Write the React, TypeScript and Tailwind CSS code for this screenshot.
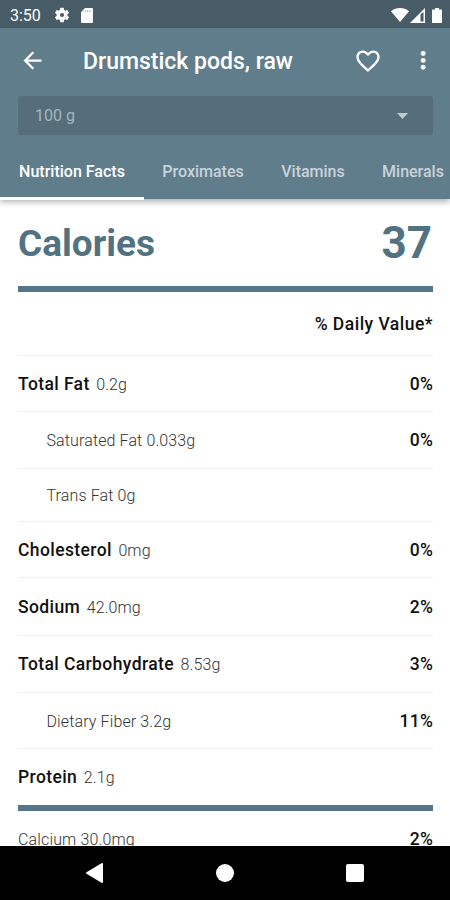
import React from "react";
import clsx from "clsx";

interface NutrientRow {
  name: string;
  amount: string;
  daily?: string;
  indented?: boolean;
  height: string;
}

const tabs = [
  { label: "Nutrition Facts", width: "w-[144px]", active: true },
  { label: "Proximates", width: "w-[118px]" },
  { label: "Vitamins", width: "w-[102px]" },
  { label: "Minerals", width: "w-[98px]" },
];

const rows: NutrientRow[] = [
  { name: "Total Fat", amount: "0.2g", daily: "0%", height: "h-[56px]" },
  { name: "Saturated Fat", amount: "0.033g", daily: "0%", indented: true, height: "h-[57px]" },
  { name: "Trans Fat", amount: "0g", indented: true, height: "h-[53px]" },
  { name: "Cholesterol", amount: "0mg", daily: "0%", height: "h-[56px]" },
  { name: "Sodium", amount: "42.0mg", daily: "2%", height: "h-[58px]" },
  { name: "Total Carbohydrate", amount: "8.53g", daily: "3%", height: "h-[57px]" },
  { name: "Dietary Fiber", amount: "3.2g", daily: "11%", indented: true, height: "h-[56px]" },
  { name: "Protein", amount: "2.1g", height: "h-[57px]" },
];

function StatusBar() {
  return (
    <div className="h-7 bg-[#485c67] flex items-center justify-between pl-[10px] pr-[8px] pt-[2px] text-white">
      <div className="flex items-center">
        <span className="w-[43px] pt-px text-[16px] leading-none">3:50</span>
        <svg className="size-[18px]" viewBox="0 0 24 24" fill="currentColor">
          <path d="M19.14 12.94c.04-.3.06-.61.06-.94 0-.32-.02-.64-.07-.94l2.03-1.58a.49.49 0 0 0 .12-.61l-1.92-3.32a.49.49 0 0 0-.59-.22l-2.39.96c-.5-.38-1.03-.7-1.62-.94l-.36-2.54a.48.48 0 0 0-.48-.41h-3.84a.48.48 0 0 0-.47.41l-.36 2.54c-.59.24-1.13.57-1.62.94l-2.39-.96a.48.48 0 0 0-.59.22L2.74 8.87a.48.48 0 0 0 .12.61l2.03 1.58c-.05.3-.09.63-.09.94s.02.64.07.94l-2.03 1.58a.49.49 0 0 0-.12.61l1.92 3.32c.12.22.37.29.59.22l2.39-.96c.5.38 1.03.7 1.62.94l.36 2.54c.05.24.24.41.48.41h3.84c.24 0 .44-.17.47-.41l.36-2.54c.59-.24 1.13-.56 1.62-.94l2.39.96c.22.08.47 0 .59-.22l1.92-3.32a.48.48 0 0 0-.12-.61l-2.01-1.58zM12 14.8a2.8 2.8 0 1 1 0-5.6 2.8 2.8 0 0 1 0 5.6z" />
        </svg>
        <svg className="ml-[10px] w-3 h-[15px]" viewBox="0 0 12 15">
          <path d="M4 0h6.7C11.5 0 12 .5 12 1.300v12.400c0 .8-.5 1.300-1.300 1.300H1.300C.5 15 0 14.500 0 13.700V4.300z" fill="white" />
          <path d="M4.300 2v2.200M6.700 2v2.200M9.100 2v2.200" stroke="#a7b1b6" strokeWidth="1" />
        </svg>
      </div>
      <div className="flex items-center">
        <svg className="w-[18px] h-[14px]" viewBox="0 0 18 14">
          <path d="M0 3.200C5-1 13-1 18 3.200L9 14z" fill="white" />
        </svg>
        <svg className="ml-px w-[15px] h-[15px]" viewBox="0 0 15 15">
          <path d="M0 15 15 0v15z" fill="white" />
          <path d="M10.500 6.200 13.500 4v9.500h-3z" fill="#485c67" />
        </svg>
        <svg className="ml-[7px] w-[10px] h-[15px]" viewBox="0 0 10 15">
          <path d="M3 0h4v1.500h2c.6 0 1 .4 1 1V14c0 .6-.4 1-1 1H1c-.6 0-1-.4-1-1V2.500c0-.6.4-1 1-1h2z" fill="white" />
        </svg>
      </div>
    </div>
  );
}

function AppBar() {
  return (
    <header className="h-[171px] bg-[#607d8b] text-white relative z-10 shadow-[0_3px_6px_rgba(0,0,0,0.3)]">
      <div className="h-[65px] flex items-center pl-[19px] pr-[13px]">
        <svg className="size-[27px] shrink-0" viewBox="0 0 24 24" fill="currentColor">
          <path d="M20 11H7.830l5.590-5.590L12 4l-8 8 8 8 1.410-1.410L7.830 13H20z" />
        </svg>
        <h1 className="ml-[37px] pt-[2px] flex-1 text-[23px] leading-none font-medium whitespace-nowrap">
          Drumstick pods, raw
        </h1>
        <svg className="size-[28px] shrink-0" viewBox="0 0 24 24" fill="currentColor">
          <path d="M16.500 3c-1.740 0-3.410.81-4.500 2.090C10.910 3.810 9.240 3 7.500 3 4.420 3 2 5.420 2 8.500c0 3.780 3.400 6.860 8.550 11.540L12 21.350l1.450-1.320C18.600 15.360 22 12.280 22 8.500 22 5.420 19.580 3 16.500 3m-4.400 15.550-.1.100-.1-.1C7.140 14.240 4 11.390 4 8.500 4 6.500 5.500 5 7.500 5c1.540 0 3.040.99 3.570 2.360h1.870C13.460 5.990 14.960 5 16.500 5c2 0 3.500 1.500 3.500 3.500 0 2.890-3.140 5.740-7.900 10.050" />
        </svg>
        <svg className="ml-[28px] size-[27px] shrink-0" viewBox="0 0 24 24" fill="currentColor">
          <circle cx="11.700" cy="5.800" r="2.200" />
          <circle cx="11.700" cy="11.900" r="2.200" />
          <circle cx="11.700" cy="18" r="2.200" />
        </svg>
      </div>

      <div className="ml-[18px] mr-[17px] mt-[3px] h-[39px] rounded-[3px] bg-[#566e79] flex items-center justify-between pl-[17px] pr-[25px]">
        <span className="pt-px text-[16px] leading-none text-[#a5b5bd]">100 g</span>
        <svg className="w-[11px] h-[6px]" viewBox="0 0 11 6">
          <path d="M0 0h11L5.500 6z" fill="#c0ccd2" />
        </svg>
      </div>

      <nav className="h-[65px] flex overflow-hidden">
        {tabs.map((tab) => (
          <div
            key={tab.label}
            className={clsx(
              "h-full shrink-0 flex items-center justify-center pt-[12px] text-[16px] leading-none font-medium whitespace-nowrap border-b-[3px]",
              tab.width,
              tab.active ? "border-white text-white" : "border-transparent text-[#c9d3d9]"
            )}
          >
            {tab.label}
          </div>
        ))}
      </nav>
    </header>
  );
}

function Nutrient({ name, amount, daily, indented, height }: NutrientRow) {
  return (
    <div
      className={clsx(
        "flex items-center justify-between pt-[2px] border-t border-[#f0f0f0] text-[16px] leading-none whitespace-nowrap",
        height
      )}
    >
      {indented ? (
        <span className="pl-[28.5px] font-light text-[#333] tracking-[0.12px]">
          {name} {amount}
        </span>
      ) : (
        <span>
          <span className="font-medium text-[17.5px] tracking-[0.4px] text-[#111]">{name}</span>
          <span className="ml-[6.5px] font-light tracking-[0.1px] text-[#333]">{amount}</span>
        </span>
      )}
      {daily && <span className="font-medium text-[17.5px] tracking-[0.2px] text-[#111]">{daily}</span>}
    </div>
  );
}

export default function App() {
  return (
    <div className="w-[450px] h-[900px] flex flex-col bg-white overflow-hidden font-[Roboto,sans-serif]">
      <StatusBar />
      <AppBar />

      <main className="flex-1 overflow-hidden px-[18px] pr-[17px]">
        <div className="h-[87px] flex items-center justify-between pt-px font-bold leading-none text-[#527282]">
          <span className="text-[37px]">Calories</span>
          <span className="pr-px text-[44px]">37</span>
        </div>
        <div className="h-[6px] bg-[#54758a]" />

        <div className="h-[63px] flex items-center justify-end pt-[2px] font-medium text-[17.5px] leading-none tracking-[0.48px] text-[#111]">
          % Daily Value*
        </div>

        {rows.map((row) => (
          <Nutrient key={row.name} {...row} />
        ))}

        <div className="h-[6px] bg-[#54758a]" />
        <div className="h-[56px] flex items-center justify-between pt-[2px] text-[16px] leading-none">
          <span className="font-light tracking-[0.15px] text-[#333]">Calcium 30.0mg</span>
          <span className="font-medium text-[17.5px] tracking-[0.2px] text-[#111]">2%</span>
        </div>
      </main>

      <div className="h-[54px] shrink-0 bg-black flex items-center px-[86px] justify-between">
        <svg className="w-[17px] h-[20px]" viewBox="0 0 17 20">
          <path d="M16 1v18L1 10z" fill="white" stroke="white" strokeWidth="2" strokeLinejoin="round" />
        </svg>
        <div className="size-[18px] rounded-full bg-white" />
        <div className="size-[18px] rounded-[2px] bg-white" />
      </div>
    </div>
  );
}
